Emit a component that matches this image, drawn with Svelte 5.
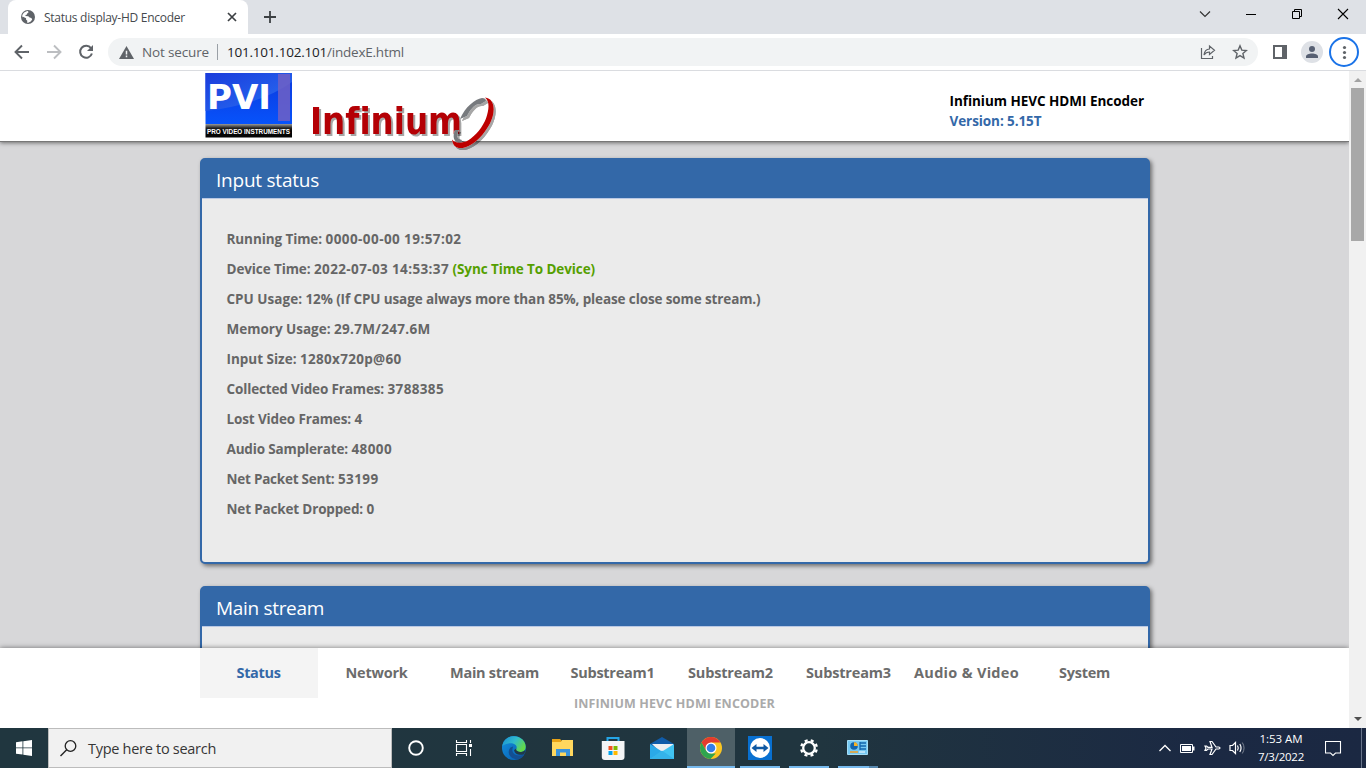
<script>
  const panels = [
    {
      title: "Input status",
      width: 103,
      rows: [
        { label: "Running Time:", labelWidth: 95.5, value: "0000-00-00 19:57:02", width: 136 },
        { label: "Device Time:", labelWidth: 84, value: "2022-07-03 14:53:37", width: 135, action: "(Sync Time To Device)", actionWidth: 142.5 },
        { label: "CPU Usage:", labelWidth: 75.5, value: "12% (If CPU usage always more than 85%, please close some stream.)", width: 455 },
        { label: "Memory Usage:", labelWidth: 104, value: "29.7M/247.6M", width: 96.5 },
        { label: "Input Size:", labelWidth: 70, value: "1280x720p@60", width: 101.5 },
        { label: "Collected Video Frames:", labelWidth: 157.5, value: "3788385", width: 56.5 },
        { label: "Lost Video Frames:", labelWidth: 124.5, value: "4", width: 8 },
        { label: "Audio Samplerate:", labelWidth: 121.5, value: "48000", width: 40.5 },
        { label: "Net Packet Sent:", labelWidth: 108, value: "53199", width: 40.5 },
        { label: "Net Packet Dropped:", labelWidth: 136.5, value: "0", width: 8 },
      ],
    },
    { title: "Main stream", width: 108, rows: [] },
  ];

  const menu = [
    { name: "Status", width: 44 },
    { name: "Network", width: 62 },
    { name: "Main stream", width: 89 },
    { name: "Substream1", width: 84 },
    { name: "Substream2", width: 85 },
    { name: "Substream3", width: 85 },
    { name: "Audio & Video", width: 105 },
    { name: "System", width: 51 },
  ];
  let current = $state("Status");

  // spread the letters so the label takes the given width
  function fit(node, width) {
    node.style.letterSpacing = "0";
    const natural = node.getBoundingClientRect().width;
    node.style.letterSpacing = (width - natural) / node.textContent.length + "px";
  }
</script>

<div class="screen">
  <div class="tabstrip">
    <div class="tab">
      <svg class="globe" width="14" height="14" viewBox="0 0 14 14">
        <circle cx="7" cy="7" r="7" fill="#5f6368" />
        <path d="M5.6 1.2 7 1l.5 1.4-1.2.8-.3 1.2-1.5.5v1.2l2.8.2 1.3 1.3 1.8.3.8 1.5-1.5 2-2.4 1.4-1.2-.1.2-1.9-1.3-1.2.1-1.3L1.5 6.6l-.3 1.1C.8 4.6 2.7 2 5.6 1.2Z" fill="#fff" />
        <path d="m9.4 2 2.5 2.2.8 2-1.7-.1-1.2-1.3-1.5-.3.1-1.2Z" fill="#5f6368" />
      </svg>
      <span class="tab-title">Status display-HD Encoder</span>
      <svg class="tab-close" width="10" height="10" viewBox="0 0 10 10"><path d="m1 1 8 8M9 1 1 9" stroke="#3c4043" stroke-width="1.7" /></svg>
    </div>
    <svg class="new-tab" width="12" height="12" viewBox="0 0 12 12"><path d="M6 0v12M0 6h12" stroke="#3c4043" stroke-width="1.8" /></svg>
    <div class="window-buttons">
      <svg width="46" height="28"><path d="m18 11.5 5 5 5-5" fill="none" stroke="#333" stroke-width="1.2" /></svg>
      <svg width="46" height="28"><path d="M18 14.5h10" stroke="#000" /></svg>
      <svg width="46" height="28"><path d="M18.5 11.5h7v7h-7zM20.5 11v-1.5h7v7H26" fill="none" stroke="#000" /></svg>
      <svg width="46" height="28"><path d="m18 9 10 10M28 9 18 19" stroke="#000" stroke-width="1.1" /></svg>
    </div>
  </div>

  <div class="toolbar">
    <svg class="nav-icon" width="16" height="16" viewBox="0 0 16 16"><path d="M15 8H2M8 1.5 1.5 8 8 14.5" fill="none" stroke="#5f6368" stroke-width="1.9" /></svg>
    <svg class="nav-icon" width="16" height="16" viewBox="0 0 16 16"><path d="M1 8h13M8 1.5 14.5 8 8 14.5" fill="none" stroke="#bcbec1" stroke-width="1.9" /></svg>
    <svg class="nav-icon" width="16" height="16" viewBox="0 0 16 16">
      <path d="M13 4.2A6 6 0 1 0 13.9 9.5" fill="none" stroke="#5f6368" stroke-width="2" />
      <path d="M15 1v6H9z" fill="#5f6368" />
    </svg>
    <div class="address">
      <svg width="15" height="13" viewBox="0 0 15 13">
        <path d="M7.5 0 15 13H0z" fill="#5f6368" /><path d="M7.5 4.8v3.7M7.5 9.6v1.6" stroke="#f1f3f4" stroke-width="1.5" />
      </svg>
      <span class="insecure"><span use:fit={67}>Not secure</span></span>
      <span class="divider"></span>
      <span class="url"><b use:fit={100}>101.101.102.101</b><span use:fit={77}>/indexE.html</span></span>
      <svg class="share" width="16" height="16" viewBox="0 0 16 16">
        <path d="M1.5 4v10.5h11V12M4 11c.4-3.8 2.3-5.8 5.5-6V2l5 4.3-5 4.2V8C7 8 5.3 9 4 11Z" fill="none" stroke="#5f6368" stroke-width="1.2" />
      </svg>
      <svg width="16" height="16" viewBox="0 0 16 16">
        <path d="m8 1.8 1.8 4.3 4.6.4-3.5 3 1.1 4.6-4-2.5-4 2.5 1.1-4.6-3.5-3 4.6-.4Z" fill="none" stroke="#5f6368" stroke-width="1.4" />
      </svg>
    </div>
    <svg class="sidepanel" width="14" height="14" viewBox="0 0 14 14"><path d="M0 0h14v14H0zM2 2v10h7V2z" fill="#5f6368" fill-rule="evenodd" /></svg>
    <svg class="avatar" width="22" height="22" viewBox="0 0 22 22">
      <circle cx="11" cy="11" r="11" fill="#dee1e6" /><circle cx="11" cy="8" r="3" fill="#576073" />
      <path d="M5 17v-1.5C5 13.5 8 12.500 11 12.500s6 1 6 3V17z" fill="#576073" />
    </svg>
    <svg class="menu-dots" width="30" height="30" viewBox="0 0 30 30">
      <circle cx="15" cy="15" r="14" fill="#fff" stroke="#1a73e8" stroke-width="2" />
      <g fill="#5f6368"><circle cx="15.5" cy="10.5" r="1.6" /><circle cx="15.5" cy="15.5" r="1.6" /><circle cx="15.5" cy="20.5" r="1.6" /></g>
    </svg>
  </div>

  <div class="viewport">
    <div class="page">
      <header>
        <div class="header-inner">
          <svg class="pvi" width="87" height="65" viewBox="0 0 87 65">
            <defs>
              <linearGradient id="pviBlue" x1="0" y1="0" x2="0" y2="1"><stop stop-color="#0d38dc" /><stop offset="1" stop-color="#0753fb" /></linearGradient>
              <linearGradient id="pviLight" x1="0" y1="0" x2="1" y2="1"><stop stop-color="#1b3cdb" /><stop offset="1" stop-color="#2870f4" /></linearGradient>
              <linearGradient id="pviGrey" x1="0" y1="0" x2="0" y2="1"><stop stop-color="#999" /><stop offset=".3" stop-color="#222" /><stop offset=".5" stop-color="#050505" /></linearGradient>
            </defs>
            <path d="M.5 0H87v51H.5z" fill="url(#pviBlue)" />
            <path d="M.5 0H87v9C65 25 35 34 .5 38z" fill="url(#pviLight)" />
            <path d="M73 1h12v47H73z" fill="#7060c4" opacity=".85" />
            <path d="M.5 51H87v13.500H.5z" fill="url(#pviGrey)" />
            <text x="2" y="36" textLength="64" lengthAdjust="spacingAndGlyphs" class="pvi-name">PVI</text>
            <text x="2" y="61" textLength="83" lengthAdjust="spacingAndGlyphs" class="pvi-sub">PRO VIDEO INSTRUMENTS</text>
          </svg>
          <svg class="infinium" width="186" height="56" viewBox="0 0 186 56">
            <text x="-1" y="39" textLength="152" lengthAdjust="spacingAndGlyphs" class="word">Infinium</text>
            <g class="ring">
              <path d="M149 24C154 12 164 4 171 3q4 0 4 3l-5 3c-6-1-11 6-14 12z" fill="#777a7e" />
              <path d="M148 35c-3 6-2 9 3 10l-2 4c-6-2-8-7-5-14z" fill="#777a7e" />
              <path d="M174 2.500c10 1 11 14 5 26-6 11-15 21-25 24-8 2-12-1-13-8 3 4 10 4 16 1 8-5 15-14 18-22 3-9 4-17-1-21Z" fill="#bd0000" />
            </g>
          </svg>
          <div class="device">
            <div><span use:fit={194.5}>Infinium HEVC HDMI Encoder</span></div>
            <div class="version"><span use:fit={92}>Version: 5.15T</span></div>
          </div>
        </div>
      </header>

      <main>
        {#each panels as panel}
          <section>
            <h2><span use:fit={panel.width}>{panel.title}</span></h2>
            <div class="rows">
              {#each panel.rows as row}
                <p>
                  <span use:fit={row.labelWidth}>{row.label}</span>
                  <span use:fit={row.width}>{row.value}</span>
                  {#if row.action}
                    <a href="#sync" use:fit={row.actionWidth}>{row.action}</a>
                  {/if}
                </p>
              {/each}
            </div>
          </section>
        {/each}
      </main>

      <footer>
        <nav>
          {#each menu as item}
            <button class:active={item.name === current} onclick={() => (current = item.name)}>
              <span use:fit={item.width}>{item.name}</span>
            </button>
          {/each}
        </nav>
        <div class="copyright"><span use:fit={201}>INFINIUM HEVC HDMI ENCODER</span></div>
      </footer>
    </div>
    <div class="scrollbar">
      <svg width="17" height="17"><path d="M5 11h8L9 7z" fill="#a3a3a3" /></svg>
      <div class="thumb"></div>
      <svg width="17" height="17"><path d="M5 6h8l-4 4z" fill="#505050" /></svg>
    </div>
  </div>

  <div class="taskbar">
    <div class="start">
      <svg width="16" height="16" viewBox="0 0 16 16"><path d="M0 2.2 6.5 1.3v6.2H0zM7.3 1.2 16 0v7.5H7.3zM0 8.3h6.5v6.3L0 13.8zM7.3 8.3H16V16l-8.7-1.2z" fill="#fff" /></svg>
    </div>
    <div class="search">
      <svg width="17" height="17" viewBox="0 0 17 17"><circle cx="10.5" cy="6" r="5.3" fill="none" stroke="#222" stroke-width="1.3" /><path d="M6.7 9.8.5 16" stroke="#222" stroke-width="1.4" /></svg>
      <span class="placeholder" use:fit={128}>Type here to search</span>
    </div>
    <div class="apps">
      <div class="app"><svg width="24" height="24"><circle cx="12" cy="12" r="6.8" fill="none" stroke="#fff" stroke-width="1.9" /></svg></div>
      <div class="app">
        <svg width="24" height="24"><path d="M3.5 4v2.5h10V4M3.5 20v-2.5h10V20M3.5 8.5h10v7h-10zM17.500 4v3M17.500 13v7" fill="none" stroke="#fff" stroke-width="1.1" /><path d="M16 8h3v3h-3z" fill="#fff" /></svg>
      </div>
      <div class="app">
        <svg width="24" height="24">
          <defs>
            <linearGradient id="edgeTop" x1="0" y1="0" x2="1" y2=".5"><stop stop-color="#168cd5" /><stop offset=".55" stop-color="#31bbcc" /><stop offset="1" stop-color="#62d94b" /></linearGradient>
            <linearGradient id="edgeLow" x1="0" y1="0" x2="1" y2="1"><stop stop-color="#1390df" /><stop offset="1" stop-color="#075aab" /></linearGradient>
          </defs>
          <circle cx="12" cy="12" r="12" fill="url(#edgeLow)" />
          <path d="M.3 10C2-.5 14-2.5 20.5 3.5 25 8 25 16 18.500 16c-3 0-6-1.500-4-3.700C16 8.500 8.500 4.500.3 10Z" fill="url(#edgeTop)" />
          <path d="M8.500 11.500C4 17 8.500 23 15 23.500c3 0 6-2.500 7.500-5-4 2-11 1.500-12-3.500-.3-1.500 0-3 .7-4.500Z" fill="#134f92" />
          <path d="M14.500 12.300c-1 1.900.8 3.200 4 3.700 2.400 0 4-1 5-2.500-.2 2-.8 3.500-1.500 4.700-5 1.500-9 0-10-4Z" fill="#20384a" />
        </svg>
      </div>
      <div class="app">
        <svg width="24" height="24">
          <path d="M1 3h8l2 2h11v15H1z" fill="#e8a317" /><path d="M1 6h9l1-2h11v16H1z" fill="#ffd75e" />
          <path d="M5 20v-7h14v7h-4v-3.5H9V20z" fill="#3a93dc" />
        </svg>
      </div>
      <div class="app">
        <svg width="24" height="24">
          <path d="M6.5 6V2h11v4" fill="none" stroke="#25a5e5" stroke-width="2" /><path d="M.8 5h22.7v16q0 3-3 3H3.800q-3 0-3-3z" fill="#f4f5f6" />
          <path d="M7.500 10h4v4h-4z" fill="#f25022" /><path d="M12.500 10h4v4h-4z" fill="#7fba00" /><path d="M7.500 15h4v4h-4z" fill="#00a4ef" /><path d="M12.500 15h4v4h-4z" fill="#ffb900" />
        </svg>
      </div>
      <div class="app">
        <svg width="24" height="24">
          <path d="M0 8 12 1l12 7v15H0z" fill="#105ca9" /><path d="M2 8h21v7l-11 3z" fill="#eef0f2" />
          <path d="M0 8v15h24z" fill="#2ba9e8" /><path d="M24 8v15H0z" fill="#41c4f2" /><path d="M0 23 12 14.500 24 23z" fill="#35b3ea" />
        </svg>
      </div>
      <div class="app open selected">
        <svg width="24" height="24">
          <circle cx="12" cy="12" r="11" fill="#fbc622" />
          <path d="M2.500 6.500A11 11 0 0 1 21.500 6.500H12L7.200 14.700z" fill="#e33b2e" />
          <path d="M2.500 6.500 7.200 14.700 12 17.500h4.800L11.500 23A11 11 0 0 1 2.500 6.500Z" fill="#2ea44f" />
          <circle cx="12" cy="12" r="5.500" fill="#fff" /><circle cx="12" cy="12" r="4.300" fill="#347ee8" />
        </svg>
      </div>
      <div class="app open">
        <svg width="24" height="24">
          <path d="M0 0h24v24H0z" fill="#0870d1" /><circle cx="12" cy="12" r="10" fill="#fff" />
          <path d="m3.500 12 5-4v2.800h7V8l5 4-5 4v-2.800h-7V16z" fill="#0e58a3" />
        </svg>
      </div>
      <div class="app open">
        <svg width="24" height="24">
          <circle cx="12" cy="12" r="5.800" fill="none" stroke="#fff" stroke-width="2.300" />
          <circle cx="12" cy="12" r="7.800" fill="none" stroke="#fff" stroke-width="2.300" stroke-dasharray="3.063 3.063" transform="rotate(11 12 12)" />
        </svg>
      </div>
      <div class="app open grouped">
        <svg width="24" height="24">
          <path d="M1.500 4.500h20v14h-20z" fill="#75c8f2" stroke="#a4def7" /><circle cx="8" cy="10" r="3.800" fill="#1265ad" />
          <path d="M8 10V6.200A3.800 3.800 0 0 1 11.800 10z" fill="#f5b126" /><path d="M14 7h6M14 10h6M14 13h6M14 6v8" stroke="#1265ad" stroke-width="1.300" />
          <path d="M4 16h8" stroke="#f5a023" stroke-width="1.500" /><path d="M13 16h6" stroke="#fff" />
        </svg>
      </div>
    </div>
    <div class="tray">
      <svg width="14" height="16"><path d="m1.500 11 5.500-5.500L12.500 11" fill="none" stroke="#fff" stroke-width="1.300" /></svg>
      <svg width="16" height="16"><path d="M.5 4.500h12v8H.5z" fill="none" stroke="#fff" /><path d="M2 6h9v5H2zM13 6.500h1.500v4H13z" fill="#fff" /></svg>
      <svg width="17" height="16"><path d="M1 6h1.500L4 7.300h4L6 1.500h2l4 5.500h2.500q1.500.2 1.500 1t-1.500 1H12l-4 5.500H6L8 9H4l-1.500 1.300H1L2 8z" fill="none" stroke="#fff" stroke-width="1.200" /></svg>
      <svg width="17" height="16"><path d="M1 5.500h2.500l3-3v11l-3-3H1zM8.500 5.500q1.500 2.500 0 5M10.800 4q2.500 4 0 8" fill="none" stroke="#fff" stroke-width="1.200" /><path d="M13.300 2.500q3.500 5.500 0 11" fill="none" stroke="#7b8493" /></svg>
    </div>
    <div class="clock">
      <div><span use:fit={43}>1:53 AM</span></div>
      <div><span use:fit={46}>7/3/2022</span></div>
    </div>
    <svg class="notifications" width="17" height="17"><path d="M.5 1.500h15v11.500h-5L8 15.500 5.500 13h-5z" fill="none" stroke="#fff" stroke-width="1.100" /></svg>
    <div class="show-desktop"></div>
  </div>
</div>

<style>
  :global(body) {
    margin: 0;
    overflow: hidden;
  }

  .screen {
    display: flex;
    flex-direction: column;
    width: 1366px;
    height: 768px;
    font-family: "Open Sans", "Noto Sans", sans-serif;
  }

  svg {
    display: block;
    flex: none;
  }

  .tabstrip {
    display: flex;
    height: 34px;
    background: #dee1e6;
  }

  .tab {
    display: flex;
    align-items: center;
    box-sizing: border-box;
    width: 240px;
    margin-left: 8px;
    padding: 0 11px 0 13px;
    background: #fff;
    border-radius: 8px 8px 0 0;
  }

  .tab-title {
    margin-left: 9px;
    font-size: 12px;
    letter-spacing: -0.27px;
    color: #45494d;
    white-space: nowrap;
  }

  .tab-close {
    margin-left: auto;
  }

  .new-tab {
    margin: 11px 0 0 16px;
  }

  .window-buttons {
    display: flex;
    margin-left: auto;
  }

  .toolbar {
    display: flex;
    align-items: center;
    box-sizing: border-box;
    height: 37px;
    padding-left: 14px;
    border-bottom: 1px solid #dadce0;
    background: #fff;
  }

  .nav-icon {
    margin-right: 16px;
  }

  .address {
    display: flex;
    align-items: center;
    box-sizing: border-box;
    width: 1150px;
    height: 28px;
    margin-left: -2px;
    padding: 0 10px 0 11px;
    border-radius: 14px;
    background: #f1f3f4;
    font-size: 13.5px;
    line-height: 18px;
    color: #5f6368;
  }

  .insecure {
    width: 67px;
    margin-left: 8px;
    white-space: nowrap;
  }

  .divider {
    width: 1px;
    height: 16px;
    margin: 0 9px 0 8px;
    background: #9aa0a6;
  }

  .url b {
    font-weight: 400;
    color: #202124;
  }

  .share {
    margin-left: auto;
    margin-right: 16px;
  }

  .sidepanel {
    margin-left: 15px;
  }

  .avatar {
    margin-left: 14px;
  }

  .menu-dots {
    margin-left: 6px;
  }

  .viewport {
    display: flex;
    height: 657px;
  }

  .page {
    position: relative;
    width: 1349px;
    height: 657px;
    overflow: hidden;
    background: #d7d7d9;
    font-weight: 700;
  }

  header {
    position: relative;
    height: 70px;
    background: #fff;
    border-bottom: 1px solid #777;
    box-shadow: 0 1px 4px rgba(0, 0, 0, 0.5);
  }

  .header-inner {
    display: flex;
    width: 950px;
    margin-left: 200px;
  }

  .pvi {
    margin: 2px 0 0 5px;
    overflow: visible;
  }

  .pvi-name {
    font: 700 33px "DejaVu Sans", sans-serif;
    fill: #fff;
  }

  .pvi-sub {
    font: 700 7.5px "Liberation Sans", sans-serif;
    fill: #fff;
  }

  .infinium {
    margin: 24px 0 -10px 19px;
    overflow: visible;
  }

  .word {
    font: 700 37.5px "DejaVu Sans", sans-serif;
    font-variant-ligatures: none;
    fill: #b40005;
    filter: drop-shadow(2px 2px 0.5px rgba(0, 0, 0, 0.35));
  }

  .ring {
    filter: drop-shadow(0 0 0.6px #fff) drop-shadow(2px 2px 0.5px rgba(0, 0, 0, 0.35));
  }

  .device {
    margin: 20px 0 0 452.5px;
    font-size: 13.5px;
    line-height: 20px;
    white-space: nowrap;
    color: #000;
  }

  .version {
    color: #3368a8;
  }

  main {
    width: 950px;
    margin: 16px 0 0 200px;
  }

  section {
    box-sizing: border-box;
    margin-bottom: 22px;
    border: 2px solid #3368a8;
    border-radius: 5px;
    background: #ebebeb;
    box-shadow: 2px 2px 4px rgba(0, 0, 0, 0.5);
  }

  h2 {
    height: 38px;
    margin: 0;
    padding-left: 14px;
    border-bottom: 1px solid #b9c8e4;
    background: #3368a8;
    color: #fff;
    font-size: 19px;
    font-weight: 400;
    line-height: 40px;
  }

  .rows {
    min-height: 312px;
    padding: 25px 24.5px 26px;
  }

  p {
    margin: 0;
    color: #666;
    font-size: 13.5px;
    line-height: 30px;
    white-space: nowrap;
  }

  p a {
    color: #559f00;
    text-decoration: none;
  }

  footer {
    position: absolute;
    right: 0;
    bottom: 0;
    left: 0;
    height: 80px;
    background: #fff;
    box-shadow: 0 0 5px rgba(0, 0, 0, 0.5);
  }

  nav {
    display: flex;
    width: 950px;
    margin-left: 200px;
  }

  nav button {
    width: 118px;
    height: 50px;
    padding: 0 1px 2px 0;
    border: 0;
    background: none;
    color: #6c6c6c;
    font: inherit;
    font-size: 14.5px;
    white-space: nowrap;
    cursor: pointer;
  }

  nav button.active {
    background: #f4f4f4;
    color: #3368a8;
  }

  .copyright {
    font-size: 12.5px;
    line-height: 11px;
    text-align: center;
    color: #aaa;
  }

  .scrollbar {
    display: flex;
    flex-direction: column;
    width: 17px;
    background: #f1f1f1;
  }

  .thumb {
    width: 13px;
    height: 153px;
    margin: 0 2px auto;
    background: #a8a8a8;
  }

  .taskbar {
    display: flex;
    align-items: center;
    height: 40px;
    background: linear-gradient(90deg, #20363f 0%, #20353f 60%, #1b2943 88%, #1b2842 100%);
    color: #fff;
  }

  .start {
    display: flex;
    align-items: center;
    justify-content: center;
    width: 48px;
  }

  .search {
    display: flex;
    align-items: center;
    box-sizing: border-box;
    width: 344px;
    height: 40px;
    padding-left: 11px;
    border: 1px solid #bcbcbc;
    background: #f1f1f1;
    color: #363636;
    font-size: 14.5px;
  }

  .placeholder {
    margin-left: 11px;
  }

  .apps {
    display: flex;
  }

  .app {
    display: flex;
    align-items: center;
    justify-content: center;
    width: 48px;
    height: 40px;
    margin-right: 1.15px;
  }

  .app.open {
    background: linear-gradient(#76b9ed, #76b9ed) center bottom / 40px 2px no-repeat;
  }

  .app.selected {
    background-color: #4e6067;
    background-size: 48px 2px;
  }

  .app.grouped {
    background: linear-gradient(90deg, #76b9ed 31px, #5788af 31px) center bottom / 40px 2px no-repeat;
  }

  .tray {
    display: flex;
    gap: 8px;
    margin-left: auto;
  }

  .clock {
    width: 66px;
    margin-left: 2px;
    font-size: 11.5px;
    line-height: 18px;
    text-align: center;
  }

  .notifications {
    margin-left: 11px;
  }

  .show-desktop {
    box-sizing: border-box;
    width: 5px;
    height: 40px;
    margin-left: 19px;
    border-left: 1px solid #68748a;
  }
</style>
